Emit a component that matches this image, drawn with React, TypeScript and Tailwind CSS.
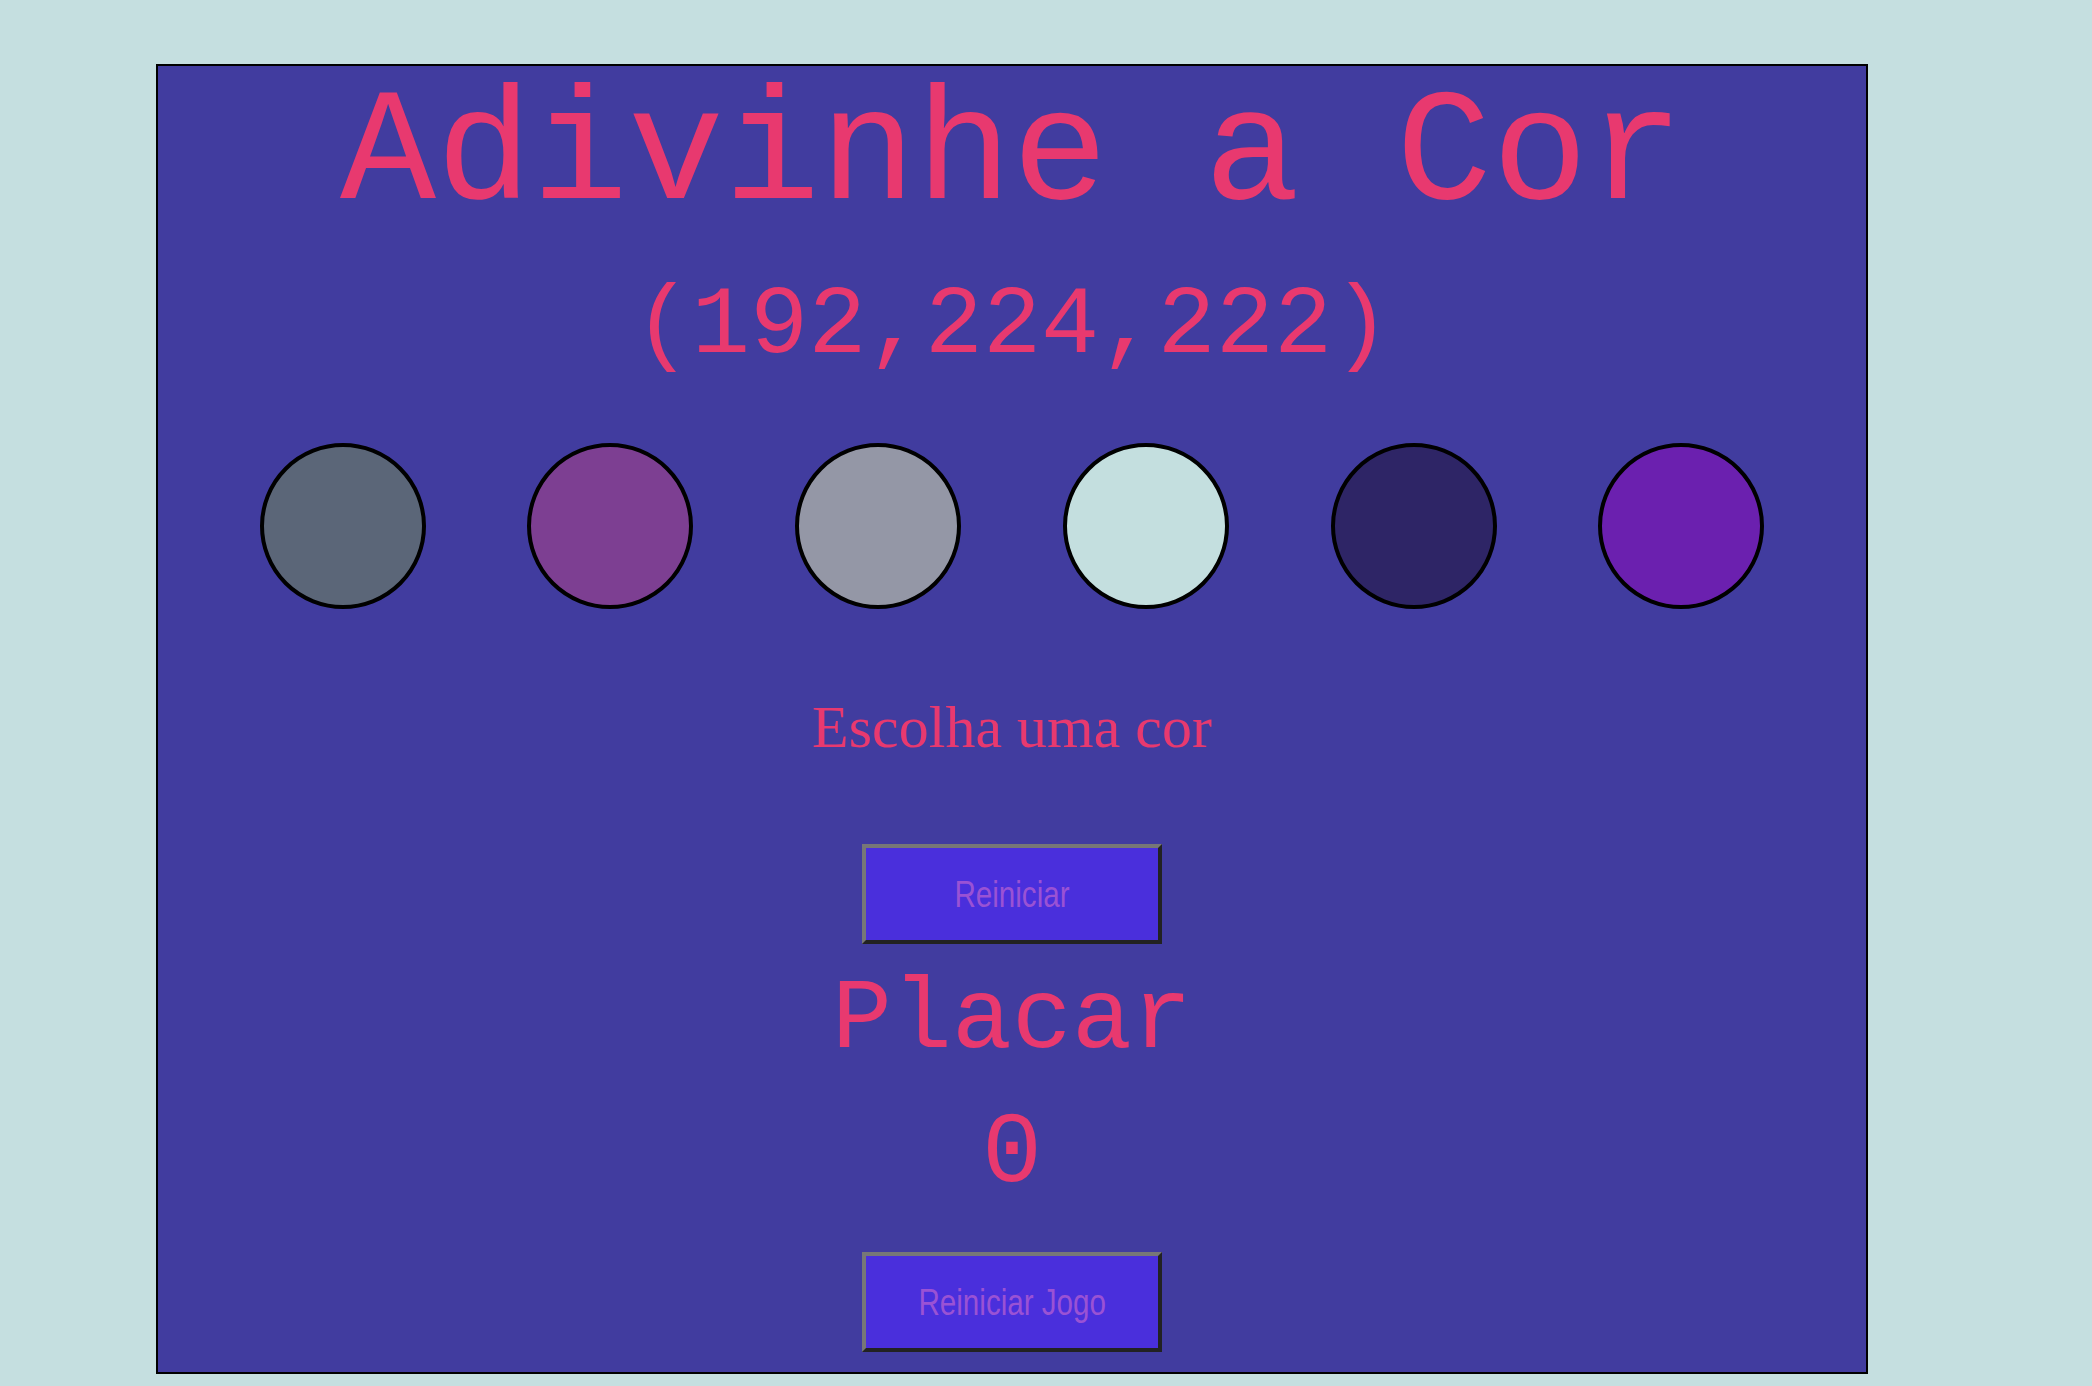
const colors = [
  "#5b6678",
  "#7d3f92",
  "#9497a6",
  "#c4dfdf",
  "#2e2566",
  "#6b20af",
];

const mono = "font-['Liberation_Mono','Courier_New',monospace]";

const GameButton = ({ label }: { label: string }) => (
  <button className="w-[300px] h-[100px] bg-[#4a2fdc] border-4 border-t-[#777777] border-l-[#777777] border-r-[#222222] border-b-[#222222] flex items-center justify-center">
    <span className="inline-block scale-x-[0.8] font-['Liberation_Sans',Arial,sans-serif] text-[37px] leading-none text-[#9a52d4] whitespace-nowrap">
      {label}
    </span>
  </button>
);

export default function App() {
  return (
    <div className="min-h-screen bg-[#c5dfe0] pt-[64px] pl-[156px]">
      <div className="w-[1712px] h-[1310px] bg-[#413c9f] border-2 border-black flex flex-col items-center text-[#e8396f]">
        <h1 className={`${mono} text-[160px] leading-[164px] mt-[8px] whitespace-nowrap`}>
          Adivinhe a Cor
        </h1>
        <p className={`${mono} text-[97px] leading-[100px] mt-[38px]`}>
          (192,224,222)
        </p>

        {/* circles */}
        <div className="w-full flex justify-evenly mt-[67px]">
          {colors.map((c) => (
            <div
              key={c}
              className="w-[166px] h-[166px] rounded-full border-4 border-black"
              style={{ backgroundColor: c }}
            />
          ))}
        </div>

        <p className="font-['Liberation_Serif','Times_New_Roman',serif] text-[60px] leading-[60px] mt-[88px]">
          Escolha uma cor
        </p>

        <div className="mt-[87px]">
          <GameButton label="Reiniciar" />
        </div>

        <h2 className={`${mono} text-[100px] leading-[100px] mt-[27px]`}>Placar</h2>
        <p className={`${mono} text-[100px] leading-[100px] mt-[34px]`}>0</p>

        <div className="mt-[47px]">
          <GameButton label="Reiniciar Jogo" />
        </div>
      </div>
    </div>
  );
}
